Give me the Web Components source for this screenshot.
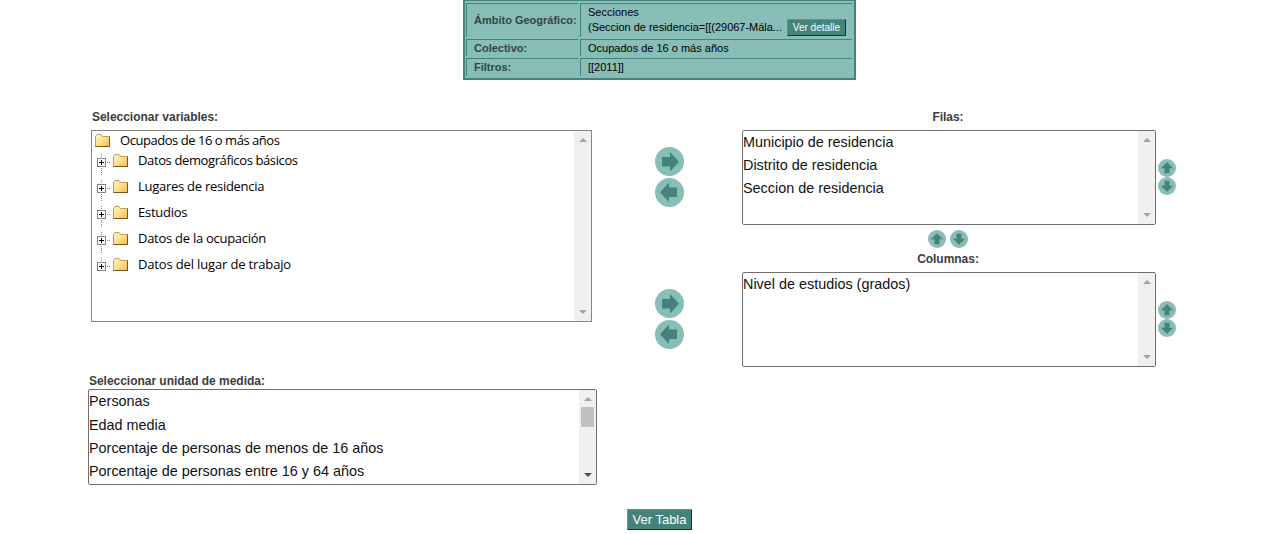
<!DOCTYPE html>
<html lang="es">
<head>
<meta charset="utf-8">
<title>Selección de variables</title>
<style>
html,body{margin:0;background:#fff;overflow:hidden}
body{font-family:"Liberation Sans",Arial,sans-serif;color:#000}
</style>
</head>
<body>
<query-page></query-page>
<script>
const define = (name, html, setup) => customElements.define(name, class extends HTMLElement {
  connectedCallback() {
    if (this.shadowRoot) return;
    const root = this.attachShadow({mode: 'open'});
    const t = document.createElement('template');
    t.innerHTML = html;
    root.append(t.content.cloneNode(true));
    if (setup) setup(this, root);
  }
});

/* Round arrow button: dir = right | left | up | down */
define('arrow-button', `
<style>
:host{display:block;width:29px;height:29px;flex:none}
:host([small]){width:18px;height:18px}
svg{display:block;width:100%;height:100%}
</style>
<svg viewBox="0 0 29 29"><circle cx="14.5" cy="14.5" r="14.5" fill="#89bdb7"/>
<path fill="#43837a"/></svg>`, (el, root) => {
  const small = el.hasAttribute('small');
  const p = root.querySelector('path');
  p.setAttribute('d', small ? 'M6.5 10.5H14.5V4.5L24.5 14.5L14.5 24.5V18.5H6.5Z' : 'M7 10H15V5L24 14.7L15 24.500V19.500H7Z');
  const a = {right: 0, down: 90, left: 180, up: 270}[el.getAttribute('dir')];
  p.setAttribute('transform', `rotate(${a} 14.5 14.5)` + (small ? ' translate(-.6 0)' : ''));
});

define('scroll-rail', `
<style>
:host{display:flex;flex-direction:column;justify-content:space-between;align-items:center;width:17px;flex:none;background:#f0f0f0;box-sizing:border-box;padding:7px 0;color:#a3a3a3}
svg{display:block;width:8px;height:4px;fill:currentColor}
i{display:none;width:13px;height:20px;background:#c1c1c1;margin-top:6px;margin-bottom:auto}
:host([thumb]) i{display:block}
:host([thumb]) .down{color:#505050}
</style>
<svg viewBox="0 0 8 4"><path d="M0 4L4 0L8 4Z"/></svg><i></i><svg class="down" viewBox="0 0 8 4"><path d="M0 0H8L4 4Z"/></svg>`);

define('list-box', `
<style>
:host{display:flex;box-sizing:border-box;height:95px;border:1px solid #6f6f6f;border-radius:2px;background:#fff;overflow:hidden}
.items{flex:1;font-size:14.4px;color:#111}
::slotted(div){height:23px;line-height:23px;white-space:nowrap}
:host([thumb]) ::slotted(div:first-child){height:24px}
</style>
<div class="items"><slot></slot></div><scroll-rail></scroll-rail>`, (el, root) => {
  if (el.hasAttribute('thumb')) root.querySelector('scroll-rail').setAttribute('thumb', '');
});

define('field-label', `
<style>:host{display:block;font:bold 12px/14px "Liberation Sans",Arial,sans-serif;letter-spacing:-.03px;color:#3c3c3c;white-space:nowrap}</style><slot></slot>`);

define('push-button', `
<style>
:host{display:block;flex:none}
button{display:block;width:100%;height:100%;box-sizing:border-box;margin:0;padding:0;border:1px solid;border-color:#5d948b #16342f #16342f #5d948b;background:#43837a;color:#fff;font:inherit;white-space:nowrap}
</style><button><slot></slot></button>`);

define('folder-icon', `
<style>:host{display:block;width:16px;height:14px;flex:none}svg{display:block}</style>
<svg width="16" height="14" viewBox="0 0 16 14">
<defs><linearGradient id="g" x1="0" y1="0" x2="1" y2="1"><stop offset="0" stop-color="#fff4c4"/><stop offset=".5" stop-color="#ffe08c"/><stop offset="1" stop-color="#f6b64a"/></linearGradient></defs>
<path d="M.5 13.500V3.500L2 1.500H6L7.500 3.500H14.500V13.500Z" fill="url(#g)" stroke="#c39a50"/>
<path d="M.5 13.500H14.500V3.500" fill="none" stroke="#7a5518"/></svg>`);

/* One branch of the variable tree; "last" ends the dotted trunk */
define('tree-node', `
<style>
:host{display:flex;align-items:center;height:26px;padding-left:5px;white-space:nowrap}
:host([root]){height:20px;padding-left:3px}
.join{display:block;width:13px;height:26px;flex:none;margin-right:3px;overflow:visible}
:host([root]) .join{display:none}
span{margin-left:9px}
</style>
<svg class="join" width="13" height="26" viewBox="0 0 13 26">
<path class="trunk" d="M4.500 7V29" stroke="#888" stroke-dasharray="1 1"/>
<path d="M10 15.500H13" stroke="#888" stroke-dasharray="1 1"/>
<rect x=".5" y="11.500" width="8" height="8" fill="#fff" stroke="#858585"/>
<path d="M2 15.500H7M4.500 13V18" stroke="#000"/></svg>
<folder-icon></folder-icon><span><slot></slot></span>`, (el, root) => {
  if (el.hasAttribute('last')) root.querySelector('.trunk').setAttribute('d', 'M4.500 7V15');
});

define('variable-tree', `
<style>
:host{display:flex;box-sizing:border-box;width:501px;height:192px;border:1px solid #858585;background:#fff;font:13px/20px "Trebuchet MS","Open Sans",sans-serif}
.nodes{flex:1;letter-spacing:-.27px;margin-top:-1px}
.kids{margin-top:-3px}
tree-node[root]{letter-spacing:-.46px}
.demo{letter-spacing:-.38px}
tree-node[last]{letter-spacing:-.15px}
</style>
<div class="nodes"><tree-node root>Ocupados de 16 o más años</tree-node>
<div class="kids"><tree-node class="demo">Datos demográficos básicos</tree-node><tree-node>Lugares de residencia</tree-node><tree-node>Estudios</tree-node><tree-node>Datos de la ocupación</tree-node><tree-node last>Datos del lugar de trabajo</tree-node></div></div><scroll-rail></scroll-rail>`);

define('query-summary', `
<style>
:host{display:grid;box-sizing:border-box;width:393px;height:80px;border:2px solid #43837a;border-top-width:1px;background:#89bdb7;padding:2px 2px 2px 1px;grid-template-columns:112px 272px;grid-template-rows:34px 17px 18px;gap:2px;font-size:11px}
div{box-sizing:border-box;border:1px solid #43837a;border-right:0;border-bottom:0;padding-left:7px;display:flex;align-items:center;white-space:nowrap}
.h{font-weight:bold;color:#2f4745}
.h:first-of-type{padding-bottom:1px}
.up{padding-bottom:2px}
.two{display:grid;grid-template-rows:15px 17px;align-items:center}
.line{display:flex;align-items:center;line-height:13px}
.line span{letter-spacing:-.02px}
push-button{width:59px;height:17px;font-size:10px;margin-left:5px}
</style>
<div class="h">Ámbito Geográfico:</div>
<div class="two"><span>Secciones</span><span class="line"><span>(Seccion de residencia=[[(29067-Mála...</span><push-button>Ver detalle</push-button></span></div>
<div class="h">Colectivo:</div><div>Ocupados de 16 o más años</div>
<div class="h up">Filtros:</div><div class="up">[[2011]]</div>`);

/* Pair of arrows that add or remove entries */
define('arrow-pair', `
<style>:host{display:flex;flex-direction:column;gap:1px}:host([small]){gap:0;margin-bottom:2px}:host([row]){flex-direction:row;gap:4px}</style><slot></slot>`);

define('query-page', `
<style>
:host{display:block;width:1271px;height:534px;overflow:hidden}
query-summary{margin-left:463px}
main{display:grid;grid-template-columns:509px 29px 435px;column-gap:58px;margin-left:88px;height:405px}
.left variable-tree{margin:6px 0 0 3px}
.left,.right{padding-top:30px}
.left field-label:first-child{margin-left:4px}
.left .unit{margin:52px 0 1px 1px}
.left list-box{height:96px}
.mid{padding-top:67px}
.mid arrow-pair{gap:1.5px}
.mid arrow-pair + arrow-pair{margin-top:82.5px}
.row{display:flex;align-items:center;gap:2px}
.row list-box{width:414px}
.right field-label{width:412px;text-align:center}
.right .row{margin-top:6px}
.right arrow-pair[row]{margin:5px 0 4px 186px}
.foot{display:flex;padding:24px 0 0 627px}
.foot push-button{width:65px;height:21px;font-size:13px}
</style>
<query-summary></query-summary>
<main>
<section class="left"><field-label>Seleccionar variables:</field-label><variable-tree></variable-tree>
<field-label class="unit">Seleccionar unidad de medida:</field-label>
<list-box thumb><div>Personas</div><div>Edad media</div><div>Porcentaje de personas de menos de 16 años</div><div>Porcentaje de personas entre 16 y 64 años</div></list-box></section>
<section class="mid">
<arrow-pair><arrow-button dir="right"></arrow-button><arrow-button dir="left"></arrow-button></arrow-pair>
<arrow-pair><arrow-button dir="right"></arrow-button><arrow-button dir="left"></arrow-button></arrow-pair></section>
<section class="right"><field-label>Filas:</field-label>
<div class="row"><list-box><div>Municipio de residencia</div><div>Distrito de residencia</div><div>Seccion de residencia</div></list-box>
<arrow-pair small><arrow-button small dir="up"></arrow-button><arrow-button small dir="down"></arrow-button></arrow-pair></div>
<arrow-pair row><arrow-button small dir="up"></arrow-button><arrow-button small dir="down"></arrow-button></arrow-pair>
<field-label>Columnas:</field-label>
<div class="row"><list-box><div>Nivel de estudios (grados)</div></list-box>
<arrow-pair small><arrow-button small dir="up"></arrow-button><arrow-button small dir="down"></arrow-button></arrow-pair></div></section>
</main>
<div class="foot"><push-button>Ver Tabla</push-button></div>`);
</script>
</body>
</html>
